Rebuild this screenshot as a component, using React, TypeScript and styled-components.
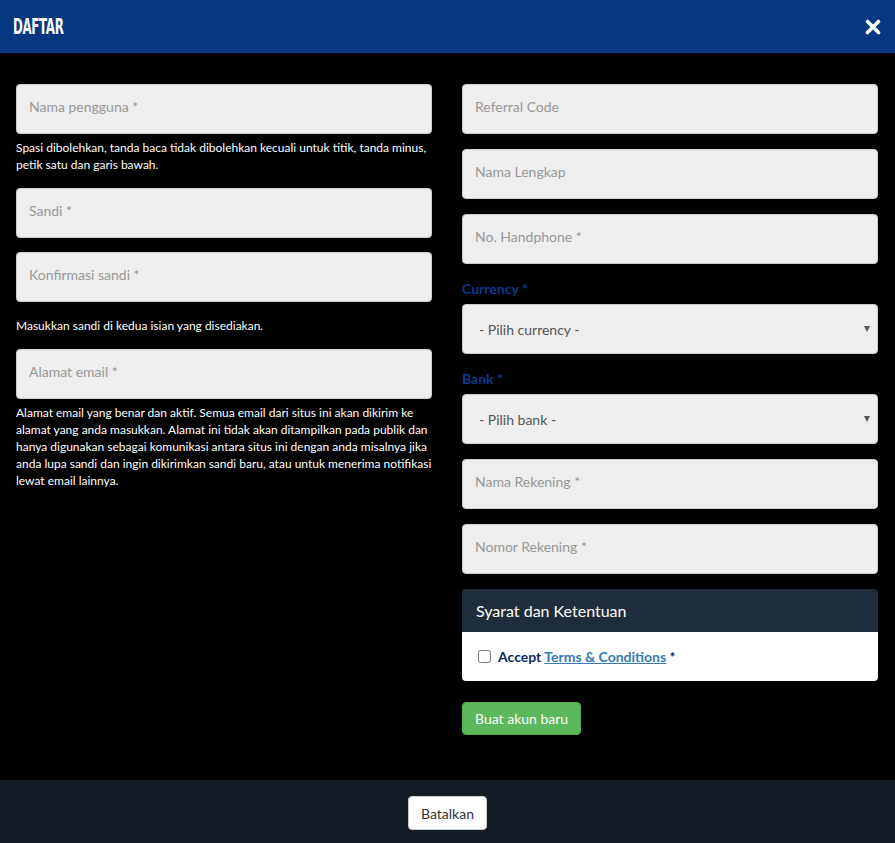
import React from "react";
import styled, { createGlobalStyle } from "styled-components";

const Global = createGlobalStyle`
  html, body { margin: 0; padding: 0; background: #000; }
  body { font-family: Lato, "Open Sans", sans-serif; }
  * { box-sizing: border-box; }
`;

const Modal = styled.div`
  width: 895px;
  min-height: 843px;
  display: flex;
  flex-direction: column;
  background: #000;
`;

const Header = styled.div`
  height: 53px;
  background: #063781;
  display: flex;
  align-items: center;
  justify-content: space-between;
  padding: 0 14px 0 13px;
`;

const Title = styled.h4`
  margin: 0;
  color: #fff;
  font-family: "DejaVu Sans Condensed", "DejaVu Sans", sans-serif;
  font-stretch: condensed;
  font-weight: 900;
  font-size: 22px;
  line-height: 22px;
  letter-spacing: -0.6px;
  text-transform: uppercase;
  transform: scaleX(0.6);
  transform-origin: left center;
`;

const Close = styled.button`
  border: 0;
  background: none;
  padding: 0;
  width: 16px;
  height: 16px;
  display: flex;
  cursor: pointer;
`;

const Body = styled.div`
  flex: 1;
  display: grid;
  grid-template-columns: 416px 416px;
  column-gap: 30px;
  padding: 31px 17px 45px 16px;
`;

const Column = styled.div`
  display: flex;
  flex-direction: column;
`;

const Group = styled.div<{ $mb?: number }>`
  display: flex;
  flex-direction: column;
  margin-bottom: ${(p) => (p.$mb ?? 15)}px;
`;

const Input = styled.input`
  height: 50px;
  width: 100%;
  padding: 0 12px 6px;
  background: #eeeeee;
  border: 1px solid #cccccc;
  border-radius: 4px;
  font-family: Lato, sans-serif;
  font-size: 14px;
  color: #555;
  outline: none;
  &::placeholder { color: #999; }
`;

const SelectWrap = styled.div`
  position: relative;
`;

const Select = styled.select`
  appearance: none;
  height: 50px;
  width: 100%;
  padding: 0 16px;
  background: #eeeeee;
  border: 1px solid #cccccc;
  border-radius: 4px;
  font-family: Lato, sans-serif;
  font-size: 14px;
  color: #555;
  outline: none;
`;

const Caret = styled.span`
  position: absolute;
  right: 8px;
  top: 50%;
  transform: translateY(-50%);
  width: 0;
  height: 0;
  border-left: 3.5px solid transparent;
  border-right: 3.5px solid transparent;
  border-top: 6px solid #555;
  pointer-events: none;
`;

const Label = styled.label`
  font-size: 14px;
  line-height: 20px;
  font-weight: 700;
  color: #0b3a8c;
  margin-bottom: 5px;
`;

const Help = styled.p<{ $mt?: number }>`
  margin: ${(p) => (p.$mt ?? 5)}px 0 0;
  font-size: 12px;
  line-height: 17px;
  color: #fff;
`;

const HelpBlock = styled.p`
  margin: 0 0 15px;
  font-size: 12px;
  line-height: 17px;
  color: #fff;
`;

const Panel = styled.div`
  border-radius: 4px;
  overflow: hidden;
  margin-bottom: 21px;
`;

const PanelHead = styled.div`
  height: 43px;
  background: #1f2d3b;
  color: #fff;
  font-size: 16px;
  padding: 0 14px 1px;
  display: flex;
  align-items: center;
`;

const PanelBody = styled.div`
  height: 49px;
  background: #fff;
  padding: 0 15px;
  display: flex;
  align-items: center;
`;

const Check = styled.label`
  display: flex;
  align-items: center;
  gap: 7px;
  font-size: 14px;
  font-weight: 700;
  color: #0b2a5c;
`;

const Box = styled.input`
  width: 13px;
  height: 13px;
  margin: 0 0 0 1px;
  accent-color: #888;
`;

const TermsLink = styled.a`
  color: #337ab7;
  text-decoration: underline;
  cursor: pointer;
`;

const Star = styled.span`
  font-weight: 700;
  color: #0b2a5c;
`;

const SubmitRow = styled.div`
  display: flex;
`;

const Submit = styled.button`
  height: 33px;
  padding: 0 12px;
  background: #5cb85c;
  border: 1px solid #4cae4c;
  border-radius: 4px;
  color: #fff;
  font-family: Lato, sans-serif;
  font-size: 14px;
  cursor: pointer;
`;

const Footer = styled.div`
  height: 63px;
  background: #131b25;
  display: flex;
  align-items: flex-start;
  justify-content: center;
  padding-top: 16px;
`;

const Cancel = styled.button`
  height: 34px;
  padding: 0 12px;
  background: #fff;
  border: 1px solid #ccc;
  border-radius: 4px;
  color: #333;
  font-family: Lato, sans-serif;
  font-size: 14px;
  cursor: pointer;
`;

export default function App() {
  return (
    <>
      <Global />
      <Modal>
        <Header>
          <Title>Daftar</Title>
          <Close aria-label="close">
            <svg width="16" height="16" viewBox="0 0 16 16">
              <path d="M2.5 2.5 L13.5 13.5 M13.5 2.5 L2.5 13.5" stroke="#fff" strokeWidth="3.6" strokeLinecap="round" />
            </svg>
          </Close>
        </Header>
        <Body>
          <Column>
            <Group>
              <Input placeholder="Nama pengguna *" />
              <Help>Spasi dibolehkan, tanda baca tidak dibolehkan kecuali untuk titik, tanda minus, petik satu dan garis bawah.</Help>
            </Group>
            <Group $mb={14}>
              <Input type="password" placeholder="Sandi *" />
            </Group>
            <Group>
              <Input type="password" placeholder="Konfirmasi sandi *" />
            </Group>
            <HelpBlock>Masukkan sandi di kedua isian yang disediakan.</HelpBlock>
            <Group>
              <Input placeholder="Alamat email *" />
              <Help>
                Alamat email yang benar dan aktif. Semua email dari situs ini akan dikirim ke alamat yang anda masukkan. Alamat ini tidak akan ditampilkan pada publik dan hanya digunakan sebagai komunikasi antara situs ini dengan anda misalnya jika anda lupa sandi dan ingin dikirimkan sandi baru, atau untuk menerima notifikasi lewat email lainnya.
              </Help>
            </Group>
          </Column>
          <Column>
            <Group>
              <Input placeholder="Referral Code" />
            </Group>
            <Group>
              <Input placeholder="Nama Lengkap" />
            </Group>
            <Group>
              <Input placeholder="No. Handphone *" />
            </Group>
            <Group>
              <Label>Currency *</Label>
              <SelectWrap>
                <Select defaultValue="">
                  <option value="">- Pilih currency -</option>
                </Select>
                <Caret />
              </SelectWrap>
            </Group>
            <Group>
              <Label>Bank *</Label>
              <SelectWrap>
                <Select defaultValue="">
                  <option value="">- Pilih bank -</option>
                </Select>
                <Caret />
              </SelectWrap>
            </Group>
            <Group>
              <Input placeholder="Nama Rekening *" />
            </Group>
            <Group>
              <Input placeholder="Nomor Rekening *" />
            </Group>
            <Panel>
              <PanelHead>Syarat dan Ketentuan</PanelHead>
              <PanelBody>
                <Check>
                  <Box type="checkbox" />
                  <span>
                    Accept <TermsLink>Terms &amp; Conditions</TermsLink> <Star>*</Star>
                  </span>
                </Check>
              </PanelBody>
            </Panel>
            <SubmitRow>
              <Submit>Buat akun baru</Submit>
            </SubmitRow>
          </Column>
        </Body>
        <Footer>
          <Cancel>Batalkan</Cancel>
        </Footer>
      </Modal>
    </>
  );
}
